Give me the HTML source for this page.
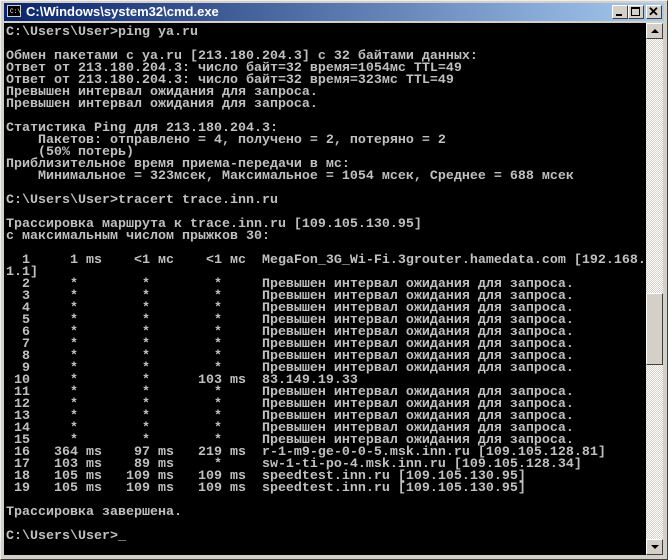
<!DOCTYPE html>
<html><head><meta charset="utf-8"><style>
*{margin:0;padding:0}
body{width:668px;height:560px;background:#d4d0c8;position:relative;overflow:hidden;font-family:"Liberation Sans",sans-serif}
.win{position:absolute;left:0;top:0;width:666px;height:558px;border-top:1px solid #eee;border-left:1px solid #eee;border-right:1px solid #404040;border-bottom:1px solid #404040}
.title{position:absolute;left:4px;top:3px;width:660px;height:18px;background:linear-gradient(to right,#0a246a,#a6caf0)}
.title span{position:absolute;left:22px;top:1px;color:#fff;font-weight:bold;font-size:13px;line-height:16px}
.ico{position:absolute;left:3px;top:2px;width:14px;height:12px;background:#000;border:1px solid #ccc;box-sizing:border-box}
.ico i{position:absolute;left:2px;top:2px;color:#fff;font-size:6px;font-style:normal;font-family:"Liberation Mono",monospace}
.btn{position:absolute;top:5px;width:16px;height:14px;background:#d4d0c8;box-sizing:border-box;border-top:1px solid #fff;border-left:1px solid #fff;border-right:1px solid #404040;border-bottom:1px solid #404040}
.con{position:absolute;left:4px;top:23px;width:642px;height:532px;background:#000}
pre{position:absolute;left:2px;top:4px;font-family:"Liberation Mono",monospace;font-size:13.33px;line-height:12px;color:#c0c0c0;font-weight:bold}
.sb{position:absolute;left:646px;top:23px;width:17px;height:532px;background:repeating-conic-gradient(#fff 0 25%,#d4d0c8 0 50%) 0 0/2px 2px}
.sbb{position:absolute;left:0;width:17px;height:16px;background:#d4d0c8;box-sizing:border-box;border-top:1px solid #fff;border-left:1px solid #fff;border-right:1px solid #404040;border-bottom:1px solid #404040}
</style></head><body>
<div class="win"></div>
<div class="title"><div class="ico"><i>C:\</i></div><span>C:\Windows\system32\cmd.exe</span></div>
<div class="btn" style="left:612px"><div style="position:absolute;left:3px;top:8px;width:6px;height:2px;background:#000"></div></div>
<div class="btn" style="left:628px"><div style="position:absolute;left:2px;top:1px;width:9px;height:9px;border:1px solid #000;border-top-width:2px;box-sizing:border-box"></div></div>
<div class="btn" style="left:646px"><div style="position:absolute;left:1px;top:-2px;font-size:13px;font-weight:bold;color:#000">✕</div></div>
<div class="con"><pre>C:\Users\User&gt;ping ya.ru

Обмен пакетами с ya.ru [213.180.204.3] с 32 байтами данных:
Ответ от 213.180.204.3: число байт=32 время=1054мс TTL=49
Ответ от 213.180.204.3: число байт=32 время=323мс TTL=49
Превышен интервал ожидания для запроса.
Превышен интервал ожидания для запроса.

Статистика Ping для 213.180.204.3:
    Пакетов: отправлено = 4, получено = 2, потеряно = 2
    (50% потерь)
Приблизительное время приема-передачи в мс:
    Минимальное = 323мсек, Максимальное = 1054 мсек, Среднее = 688 мсек

C:\Users\User&gt;tracert trace.inn.ru

Трассировка маршрута к trace.inn.ru [109.105.130.95]
с максимальным числом прыжков 30:

  1     1 ms    &lt;1 мс    &lt;1 мс  MegaFon_3G_Wi-Fi.3grouter.hamedata.com [192.168.
1.1]
  2     *        *        *     Превышен интервал ожидания для запроса.
  3     *        *        *     Превышен интервал ожидания для запроса.
  4     *        *        *     Превышен интервал ожидания для запроса.
  5     *        *        *     Превышен интервал ожидания для запроса.
  6     *        *        *     Превышен интервал ожидания для запроса.
  7     *        *        *     Превышен интервал ожидания для запроса.
  8     *        *        *     Превышен интервал ожидания для запроса.
  9     *        *        *     Превышен интервал ожидания для запроса.
 10     *        *      103 ms  83.149.19.33
 11     *        *        *     Превышен интервал ожидания для запроса.
 12     *        *        *     Превышен интервал ожидания для запроса.
 13     *        *        *     Превышен интервал ожидания для запроса.
 14     *        *        *     Превышен интервал ожидания для запроса.
 15     *        *        *     Превышен интервал ожидания для запроса.
 16   364 ms    97 ms   219 ms  r-1-m9-ge-0-0-5.msk.inn.ru [109.105.128.81]
 17   103 ms    89 ms     *     sw-1-ti-po-4.msk.inn.ru [109.105.128.34]
 18   105 ms   109 ms   109 ms  speedtest.inn.ru [109.105.130.95]
 19   105 ms   109 ms   109 ms  speedtest.inn.ru [109.105.130.95]

Трассировка завершена.

C:\Users\User&gt;_</pre></div>
<div class="sb">
<div class="sbb" style="top:0"><div style="position:absolute;left:4px;top:5px;border-left:4px solid transparent;border-right:4px solid transparent;border-bottom:4px solid #000"></div></div>
<div class="sbb" style="top:270px;height:72px"></div>
<div class="sbb" style="top:516px"><div style="position:absolute;left:4px;top:5px;border-left:4px solid transparent;border-right:4px solid transparent;border-top:4px solid #000"></div></div>
</div>
</body></html>
